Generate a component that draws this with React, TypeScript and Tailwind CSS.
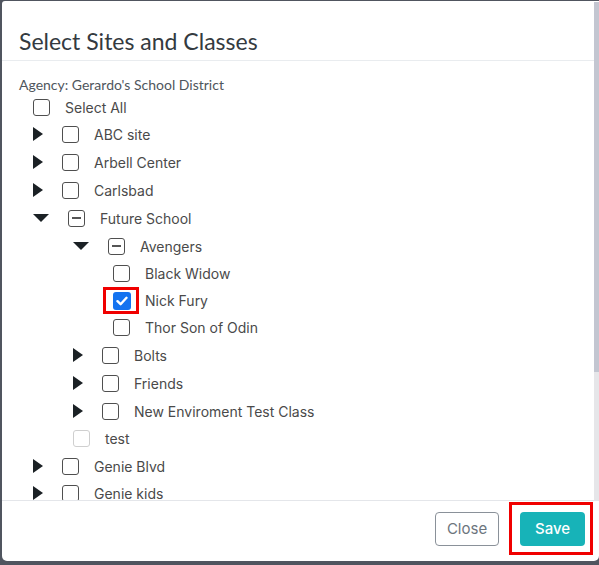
import React from "react";

type Check = "off" | "on" | "mixed" | "faint";

function Box({ state }: { state: Check }) {
  if (state === "on") {
    return (
      <span className="flex h-[18px] w-[18px] shrink-0 items-center justify-center rounded-[3px] bg-[#1473f0]">
        <svg width="12" height="10" viewBox="0 0 12 10">
          <path d="M1.5 5.2 L4.6 8.2 L10.5 1.8" fill="none" stroke="#fff" strokeWidth="2.4" strokeLinecap="round" strokeLinejoin="round" />
        </svg>
      </span>
    );
  }
  if (state === "mixed") {
    return (
      <span className="flex h-[17px] w-[17px] shrink-0 items-center justify-center rounded-[3px] border border-[#4f4f4f] bg-white">
        <span className="h-[2px] w-[9px] bg-[#555]" />
      </span>
    );
  }
  if (state === "faint") {
    return <span className="h-[17px] w-[17px] shrink-0 rounded-[3px] border border-[#cfcfcf] bg-white" />;
  }
  return <span className="h-[17px] w-[17px] shrink-0 rounded-[3px] border border-[#4f4f4f] bg-white" />;
}

function CaretRight() {
  return (
    <svg width="10" height="14" viewBox="0 0 10 14" className="shrink-0">
      <path d="M0 0 L10 7 L0 14 Z" fill="#1b2125" />
    </svg>
  );
}

function CaretDown() {
  return (
    <svg width="16" height="8" viewBox="0 0 16 8" className="shrink-0">
      <path d="M0 0 L16 0 L8 8 Z" fill="#1b2125" />
    </svg>
  );
}

const label = "text-[14px] text-[#4a4a4a] whitespace-nowrap";

export default function App() {
  return (
    <div className="h-[565px] w-[599px] overflow-hidden bg-[#50555f] pl-[2px] pt-[1px]" style={{ fontFamily: "Inter, 'Liberation Sans', sans-serif" }}>
      <div className="flex h-[560px] w-[597px] flex-col overflow-hidden rounded-b-[5px] rounded-tl-[3px] bg-white">
        <div className="flex h-[499px]">
          <div className="flex min-w-0 flex-1 flex-col">
            {/* header */}
            <div className="h-[60px] shrink-0 border-b border-[#e9ecef] pl-[17px] pt-[29px]">
              <h2 className="text-[23px] leading-none text-[#343a40]" style={{ fontFamily: "Lato, 'Noto Sans', sans-serif" }}>
                Select Sites and Classes
              </h2>
            </div>
            {/* tree */}
            <div className="flex-1 overflow-hidden pt-[14px]">
              <div className="pl-[17px] text-[14px] leading-[19px] text-[#4f565d]" style={{ fontFamily: "Lato, 'Noto Sans', sans-serif" }}>
                Agency: Gerardo's School District
              </div>

              <div className="flex h-[26px] items-center gap-[15px] pl-[31px]">
                <Box state="off" />
                <span className={label}>Select All</span>
              </div>

              <div className="flex h-[28px] items-center pl-[31px]">
                <span className="flex w-[29px]"><CaretRight /></span>
                <Box state="off" />
                <span className={`${label} ml-[15px]`}>ABC site</span>
              </div>
              <div className="flex h-[28px] items-center pl-[31px]">
                <span className="flex w-[29px]"><CaretRight /></span>
                <Box state="off" />
                <span className={`${label} ml-[15px]`}>Arbell Center</span>
              </div>
              <div className="flex h-[28px] items-center pl-[31px]">
                <span className="flex w-[29px]"><CaretRight /></span>
                <Box state="off" />
                <span className={`${label} ml-[15px]`}>Carlsbad</span>
              </div>

              <div className="flex h-[28px] items-center pl-[31px]">
                <span className="flex w-[35px]"><CaretDown /></span>
                <Box state="mixed" />
                <span className={`${label} ml-[15px]`}>Future School</span>
              </div>
              <div className="flex h-[28px] items-center pl-[71px]">
                <span className="flex w-[35px]"><CaretDown /></span>
                <Box state="mixed" />
                <span className={`${label} ml-[15px]`}>Avengers</span>
              </div>

              <div className="flex h-[27px] items-center pl-[111px]">
                <Box state="off" />
                <span className={`${label} ml-[15px]`}>Black Widow</span>
              </div>
              <div className="flex h-[27px] items-center pl-[111px]">
                <span className="relative flex">
                  <Box state="on" />
                  <span className="absolute left-[-10px] top-[-5px] h-[27px] w-[36px] border-[3px] border-[#f00000]" />
                </span>
                <span className={`${label} ml-[14px]`}>Nick Fury</span>
              </div>
              <div className="flex h-[27px] items-center pl-[111px]">
                <Box state="off" />
                <span className={`${label} ml-[15px]`}>Thor Son of Odin</span>
              </div>

              <div className="flex h-[28px] items-center pl-[71px]">
                <span className="flex w-[29px]"><CaretRight /></span>
                <Box state="off" />
                <span className={`${label} ml-[15px]`}>Bolts</span>
              </div>
              <div className="flex h-[28px] items-center pl-[71px]">
                <span className="flex w-[29px]"><CaretRight /></span>
                <Box state="off" />
                <span className={`${label} ml-[15px]`}>Friends</span>
              </div>
              <div className="flex h-[28px] items-center pl-[71px]">
                <span className="flex w-[29px]"><CaretRight /></span>
                <Box state="off" />
                <span className={`${label} ml-[15px]`}>New Enviroment Test Class</span>
              </div>
              <div className="flex h-[27px] items-center pl-[71px]">
                <Box state="faint" />
                <span className={`${label} ml-[15px]`}>test</span>
              </div>

              <div className="flex h-[28px] items-center pl-[31px]">
                <span className="flex w-[29px]"><CaretRight /></span>
                <Box state="off" />
                <span className={`${label} ml-[15px]`}>Genie Blvd</span>
              </div>
              <div className="flex h-[26px] items-center pl-[31px]">
                <span className="flex w-[29px]"><CaretRight /></span>
                <Box state="off" />
                <span className={`${label} ml-[15px]`}>Genie kids</span>
              </div>
            </div>
          </div>
          {/* scrollbar */}
          <div className="flex w-[5px] shrink-0 flex-col pt-[1px]">
            <div className="h-[370px] bg-[#c3c6d1]" />
            <div className="flex-1 bg-[#e6e6e9]" />
          </div>
        </div>

        {/* footer */}
        <div className="flex flex-1 items-start justify-end gap-[21px] border-t border-[#e4e6ea] pr-[14px] pt-[11px]">
          <button className="flex h-[34px] w-[64px] items-center justify-center rounded-[4px] border border-[#8a9199] bg-white text-[15px] text-[#6c757d]">
            Close
          </button>
          <span className="relative flex">
            <button className="flex h-[34px] w-[65px] items-center justify-center rounded-[4px] bg-[#17b3b8] text-[15px] font-medium text-white">
              Save
            </button>
            <span className="absolute left-[-11px] top-[-10px] h-[53px] w-[84px] border-[3px] border-[#f00000]" />
          </span>
        </div>
      </div>
    </div>
  );
}
